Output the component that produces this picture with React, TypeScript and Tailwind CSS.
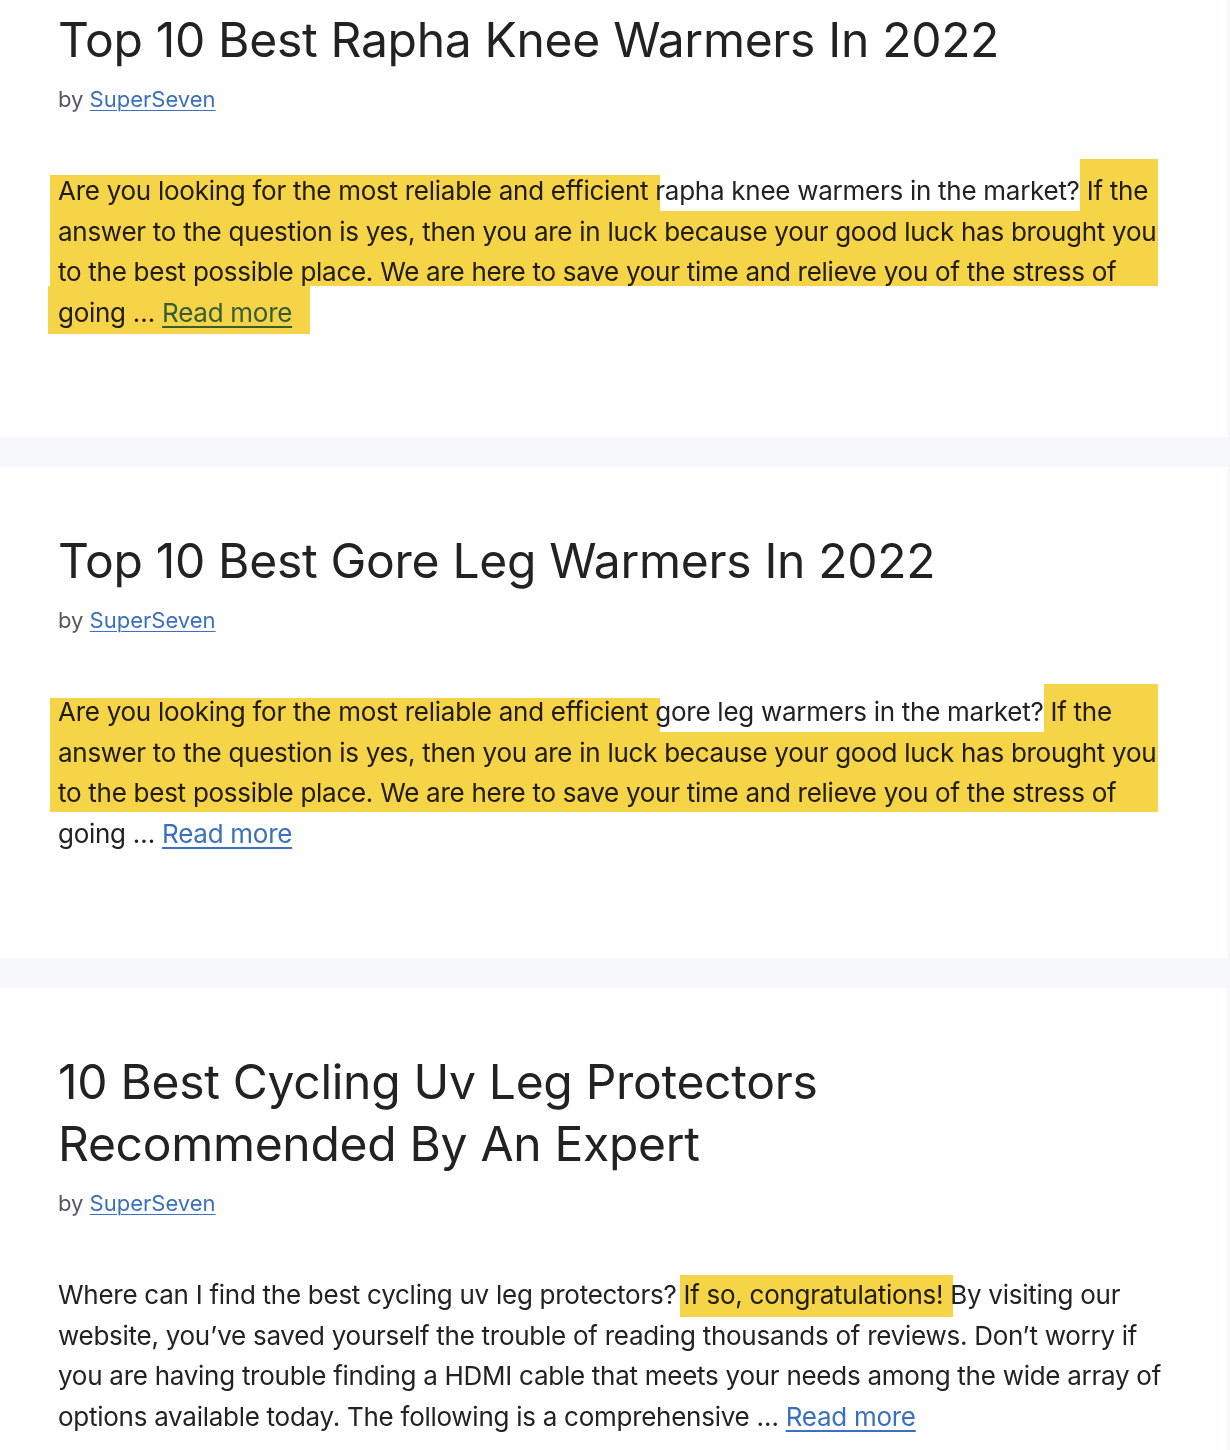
import React from 'react';

type Mark = { left: number; top: number; width: number; height: number };

const Highlight = ({ left, top, width, height }: Mark) => (
  <span
    className="pointer-events-none absolute bg-[#f5d447] mix-blend-multiply"
    style={{ left, top, width, height }}
  />
);

const Byline = () => (
  <p className="mt-[10px] text-[22px] leading-[36px] text-[#575760]">
    by{' '}
    <a href="#" className="text-[#3a70be] underline underline-offset-[3px] decoration-1">
      SuperSeven
    </a>
  </p>
);

const ReadMore = () => (
  <a href="#" className="text-[#3a70be] underline underline-offset-[4px] decoration-[1.5px]">
    Read more
  </a>
);

const App = () => {
  return (
    <div className="h-[1450px] overflow-hidden bg-[#f7f8f9] font-['Inter','Liberation_Sans',sans-serif] text-[#222222]">
      <div className="-mt-[54px] flex w-[1227px] flex-col gap-[30px]">
        {/* post 1 */}
        <article className="bg-white pl-[58px] pr-[58px] pt-[63px] pb-[104px]">
          <h2 className="text-[48px] leading-[62px] font-normal tracking-[-0.3px]">
            Top 10 Best Rapha Knee Warmers In 2022
          </h2>
          <Byline />
          <div className="relative mt-[54px]">
            <p className="whitespace-nowrap text-[26px] leading-[40.5px] tracking-[-0.27px]">
              Are you looking for the most reliable and efficient rapha knee warmers in the market? If the
              <br />
              answer to the question is yes, then you are in luck because your good luck has brought you
              <br />
              to the best possible place. We are here to save your time and relieve you of the stress of
              <br />
              going … <ReadMore />
            </p>
            <Highlight left={-8} top={4} width={610} height={36} />
            <Highlight left={1022} top={-12} width={78} height={52} />
            <Highlight left={-8} top={40} width={1108} height={75} />
            <Highlight left={-10} top={115} width={262} height={48} />
          </div>
        </article>

        {/* post 2 */}
        <article className="bg-white pl-[58px] pr-[58px] pt-[63px] pb-[104px]">
          <h2 className="text-[48px] leading-[62px] font-normal tracking-[-0.3px]">
            Top 10 Best Gore Leg Warmers In 2022
          </h2>
          <Byline />
          <div className="relative mt-[54px]">
            <p className="whitespace-nowrap text-[26px] leading-[40.5px] tracking-[-0.27px]">
              Are you looking for the most reliable and efficient gore leg warmers in the market? If the
              <br />
              answer to the question is yes, then you are in luck because your good luck has brought you
              <br />
              to the best possible place. We are here to save your time and relieve you of the stress of
              <br />
              going … <ReadMore />
            </p>
            <Highlight left={-8} top={6} width={610} height={34} />
            <Highlight left={986} top={-8} width={114} height={48} />
            <Highlight left={-8} top={40} width={1108} height={80} />
          </div>
        </article>

        {/* post 3 */}
        <article className="bg-white pl-[58px] pr-[58px] pt-[63px] pb-[104px]">
          <h2 className="text-[48px] leading-[62px] font-normal tracking-[-0.3px]">
            10 Best Cycling Uv Leg Protectors
            <br />
            Recommended By An Expert
          </h2>
          <Byline />
          <div className="relative mt-[54px]">
            <p className="whitespace-nowrap text-[26px] leading-[40.5px] tracking-[-0.27px]">
              Where can I find the best cycling uv leg protectors? If so, congratulations! By visiting our
              <br />
              website, you’ve saved yourself the trouble of reading thousands of reviews. Don’t worry if
              <br />
              you are having trouble finding a HDMI cable that meets your needs among the wide array of
              <br />
              options available today. The following is a comprehensive … <ReadMore />
            </p>
            <Highlight left={622} top={0} width={273} height={42} />
          </div>
        </article>
      </div>
    </div>
  );
};

export default App;
